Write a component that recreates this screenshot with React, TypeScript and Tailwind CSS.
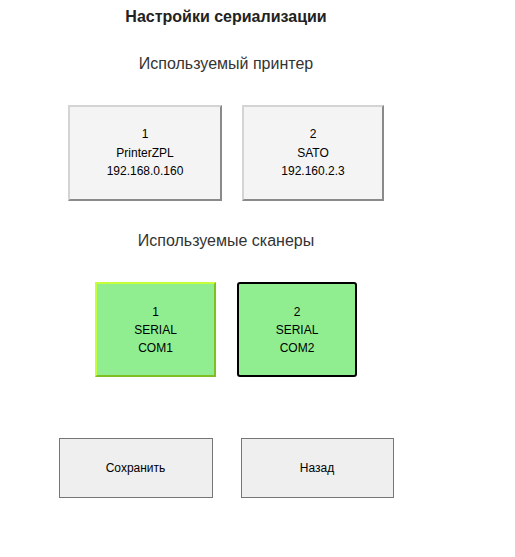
export default function App() {
  const printers = [
    { id: 1, name: "PrinterZPL", addr: "192.168.0.160", w: "w-[154px]" },
    { id: 2, name: "SATO", addr: "192.160.2.3", w: "w-[142px]" },
  ]

  return (
    <div className="w-[452px] bg-white font-['Liberation_Sans',Arial,sans-serif] text-[#222]">
      <h1 className="pt-[5px] text-center text-base font-bold leading-6">Настройки сериализации</h1>

      <h2 className="mt-[23px] text-center text-base leading-6 text-[#333]">Используемый принтер</h2>
      <div className="mt-[29px] flex justify-center gap-5">
        {printers.map((p) => (
          <div
            key={p.id}
            className={`${p.w} flex h-[96px] flex-col items-center justify-center border-2 border-t-[#d4d4d4] border-l-[#d4d4d4] border-r-[#8a8a8a] border-b-[#8a8a8a] bg-[#f4f4f4] text-xs leading-[18.5px] text-black`}
          >
            <div>{p.id}</div>
            <div>{p.name}</div>
            <div>{p.addr}</div>
          </div>
        ))}
      </div>

      <h2 className="mt-7 text-center text-base leading-6 text-[#333]">Используемые сканеры</h2>
      <div className="mt-[29px] flex justify-center gap-[21px]">
        <div className="flex h-[95px] w-[121px] flex-col items-center justify-center border-2 border-t-[#c4ff3a] border-l-[#c4ff3a] border-r-[#7fbf23] border-b-[#7fbf23] bg-[#90ee90] text-xs leading-[18px] text-black">
          <div>1</div>
          <div>SERIAL</div>
          <div>COM1</div>
        </div>
        <div className="flex h-[95px] w-[120px] flex-col items-center justify-center rounded-[3px] border-2 border-black bg-[#90ee90] text-xs leading-[18px] text-black">
          <div>2</div>
          <div>SERIAL</div>
          <div>COM2</div>
        </div>
      </div>

      <div className="mt-[61px] flex justify-center gap-7">
        <button className="h-[60px] w-[154px] border border-[#767676] bg-[#efefef] text-xs text-black">
          Сохранить
        </button>
        <button className="h-[60px] w-[153px] border border-[#767676] bg-[#efefef] text-xs text-black">
          Назад
        </button>
      </div>
    </div>
  )
}
